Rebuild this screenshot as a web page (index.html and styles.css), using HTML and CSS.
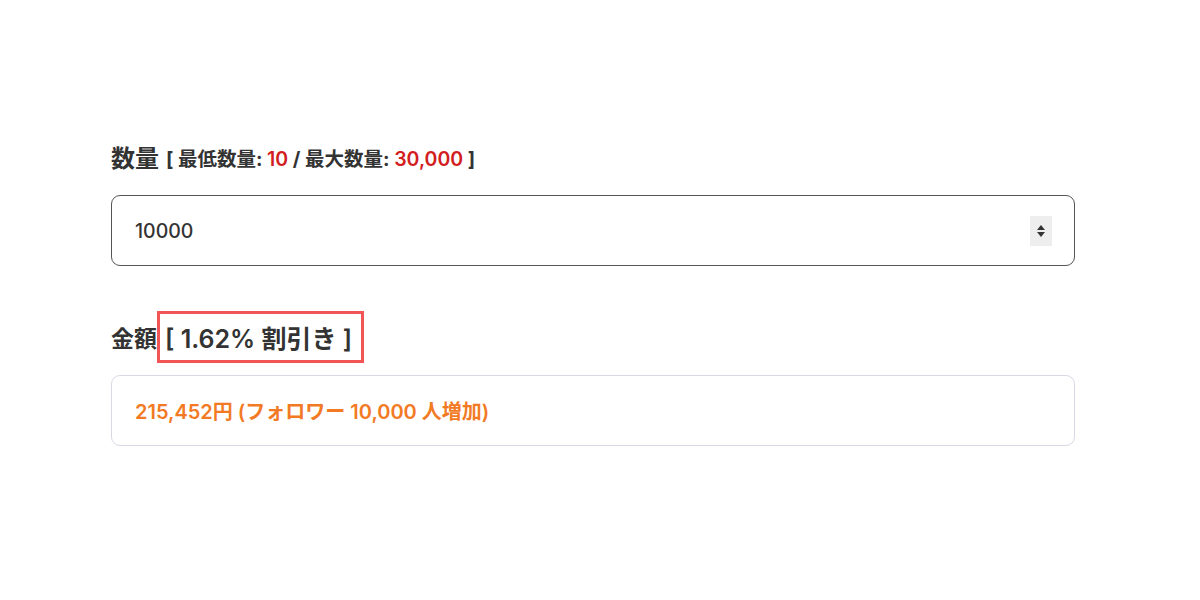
FILE: index.html
```html
<!DOCTYPE html>
<html lang="ja">
  <head>
    <meta charset="utf-8" />
    <title>数量と金額</title>
    <link rel="stylesheet" href="styles.css">
  </head>
  <body>
    <div class="form">
      <div class="field">
        <div class="label">
          数量
          <span class="limits">[ 最低数量: <b class="red">10</b> / 最大数量: <b class="red">30,000</b> ]</span>
        </div>
        <div class="input">
          <span class="value">10000</span>
          <span class="spinner">
            <svg width="10" height="18" viewBox="0 0 10 18">
              <path d="M5 3 L9 8 L1 8 Z" fill="#333" />
              <path d="M5 15 L9 10 L1 10 Z" fill="#333" />
            </svg>
          </span>
        </div>
      </div>
      <div class="field">
        <div class="label price-label">
          金額
          <span class="discount">[ 1.62% 割引き ]</span>
        </div>
        <div class="output">215,452円 (フォロワー 10,000 人増加)</div>
      </div>
    </div>
  </body>
</html>
```

FILE: styles.css
```css
body {
  margin: 0;
  font-family: Inter, "Noto Sans CJK JP", sans-serif;
  background-color: #fff;
  color: #333;
}

.form {
  width: 964px;
  margin-left: 111px;
  padding-top: 137px;
}

.field {
  margin-bottom: 45px;
}

.label {
  font-size: 24px;
  font-weight: 700;
  color: #333;
  display: flex;
  align-items: center;
  gap: 7px;
  height: 38px;
  margin-bottom: 20px;
}

.limits {
  font-size: 19.5px;
  font-weight: 700;
  color: #333;
  margin-top: 3px;
}

.red {
  color: #d21e1e;
  font-size: 19.5px;
  font-weight: 600;
}

.input {
  height: 69px;
  border: 1px solid #555;
  border-radius: 9px;
  display: flex;
  align-items: center;
  justify-content: space-between;
  padding: 0 22px 0 23px;
}

.value {
  font-size: 19.5px;
  font-weight: 500;
  color: #333;
}

.spinner {
  width: 22px;
  height: 30px;
  background-color: #eee;
  display: flex;
  align-items: center;
  justify-content: center;
}

.price-label {
  font-size: 23px;
  height: 52px;
  margin-bottom: 12px;
  gap: 0;
}

.discount {
  font-size: 25px;
  font-weight: 600;
  border: 3px solid #f25555;
  padding: 0 9px 0 5px;
  height: 46px;
  display: flex;
  align-items: center;
}

.output {
  height: 69px;
  border: 1px solid #d8d8e6;
  border-radius: 9px;
  display: flex;
  align-items: center;
  padding: 0 23px;
  font-size: 20px;
  font-weight: 600;
  color: #f27a24;
}
```
